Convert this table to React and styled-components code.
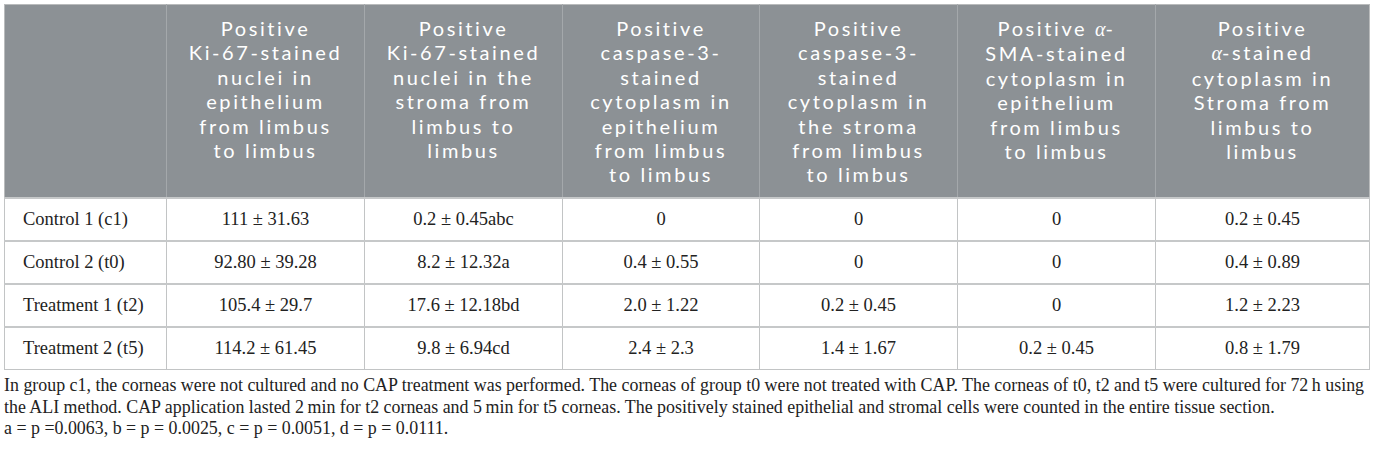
import React from 'react';
import styled, { createGlobalStyle } from 'styled-components';

const GlobalStyle = createGlobalStyle`
	body {
		margin: 0;
		background: #ffffff;
	}
`;

const Page = styled.div`
	padding: 4px 6px 0 4px;
	width: 1365px;
`;

const Table = styled.table`
	width: 1365px;
	table-layout: fixed;
	border-collapse: collapse;
	border: 1px solid #b9bbbc;
`;

const HeadCell = styled.th`
	background: #8c9195;
	color: #ffffff;
	font-family: Lato, 'Open Sans', sans-serif;
	font-weight: 400;
	font-size: 20px;
	line-height: 24.4px;
	letter-spacing: 2.6px;
	text-align: center;
	vertical-align: top;
	padding: 11px 0 10px 0;
	height: 171px;
	border-left: 1px solid #a4a8ab;
	&:first-child {
		border-left: none;
	}
`;

const HeadLine = styled.span`
	display: block;
	white-space: nowrap;
`;

const Alpha = styled.span`
	font-family: 'Liberation Serif', serif;
	font-style: italic;
	letter-spacing: 0;
`;

const Cell = styled.td`
	font-family: 'Liberation Serif', 'Times New Roman', serif;
	font-size: 18.5px;
	color: #222222;
	height: 41px;
	padding: 0 0 0 ${(p) => (p.$label ? '18px' : '0')};
	text-align: ${(p) => (p.$label ? 'left' : 'center')};
	vertical-align: middle;
	border: 1px solid #c2c4c5;
	border-top: 2px solid #c6c8c9;
	white-space: nowrap;
`;

const Notes = styled.div`
	font-family: 'Liberation Serif', 'Times New Roman', serif;
	font-size: 17.9px;
	line-height: 21.5px;
	color: #222222;
	margin-top: 5px;
`;

const NoteLine = styled.div`
	white-space: nowrap;
`;

const a = 'α';

const headers = [
	[],
	['Positive', 'Ki-67-stained', 'nuclei in', 'epithelium', 'from limbus', 'to limbus'],
	['Positive', 'Ki-67-stained', 'nuclei in the', 'stroma from', 'limbus to', 'limbus'],
	['Positive', 'caspase-3-', 'stained', 'cytoplasm in', 'epithelium', 'from limbus', 'to limbus'],
	['Positive', 'caspase-3-', 'stained', 'cytoplasm in', 'the stroma', 'from limbus', 'to limbus'],
	[<>Positive <Alpha>{a}</Alpha>-</>, 'SMA-stained', 'cytoplasm in', 'epithelium', 'from limbus', 'to limbus'],
	['Positive', <><Alpha>{a}</Alpha>-stained</>, 'cytoplasm in', 'Stroma from', 'limbus to', 'limbus'],
];

const widths = [162, 198, 198, 197, 198, 198, 214];

const rows = [
	['Control 1 (c1)', '111 ± 31.63', '0.2 ± 0.45abc', '0', '0', '0', '0.2 ± 0.45'],
	['Control 2 (t0)', '92.80 ± 39.28', '8.2 ± 12.32a', '0.4 ± 0.55', '0', '0', '0.4 ± 0.89'],
	['Treatment 1 (t2)', '105.4 ± 29.7', '17.6 ± 12.18bd', '2.0 ± 1.22', '0.2 ± 0.45', '0', '1.2 ± 2.23'],
	['Treatment 2 (t5)', '114.2 ± 61.45', '9.8 ± 6.94cd', '2.4 ± 2.3', '1.4 ± 1.67', '0.2 ± 0.45', '0.8 ± 1.79'],
];

const notes = [
	'In group c1, the corneas were not cultured and no CAP treatment was performed. The corneas of group t0 were not treated with CAP. The corneas of t0, t2 and t5 were cultured for 72\u2009h using',
	'the ALI method. CAP application lasted 2\u2009min for t2 corneas and 5\u2009min for t5 corneas. The positively stained epithelial and stromal cells were counted in the entire tissue section.',
	'a = p =0.0063, b = p = 0.0025, c = p = 0.0051, d = p = 0.0111.',
];

export default function App() {
	return (
		<Page>
			<GlobalStyle />
			<Table>
				<colgroup>
					{widths.map((w, i) => <col key={i} style={{ width: w }} />)}
				</colgroup>
				<thead>
					<tr>
						{headers.map((lines, i) => (
							<HeadCell key={i}>
								{lines.map((l, j) => <HeadLine key={j}>{l}</HeadLine>)}
							</HeadCell>
						))}
					</tr>
				</thead>
				<tbody>
					{rows.map((r, i) => (
						<tr key={i}>
							{r.map((v, j) => <Cell key={j} $label={j === 0}>{v}</Cell>)}
						</tr>
					))}
				</tbody>
			</Table>
			<Notes>
				{notes.map((n, i) => <NoteLine key={i}>{n}</NoteLine>)}
			</Notes>
		</Page>
	);
}
